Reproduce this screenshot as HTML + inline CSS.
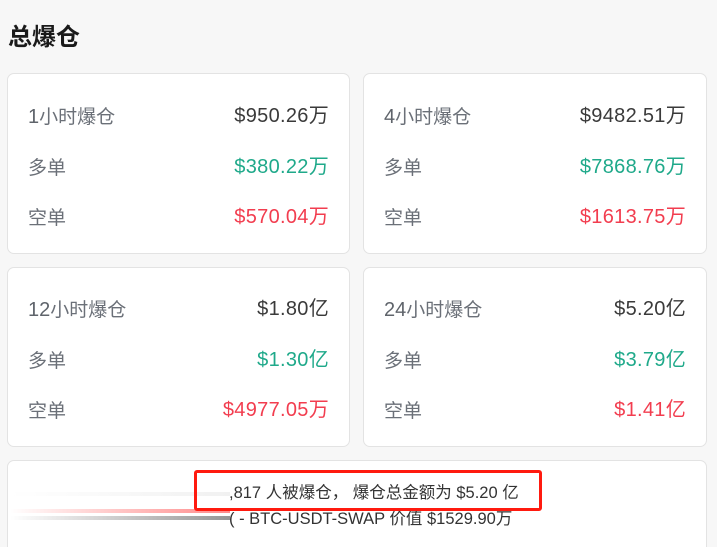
<!DOCTYPE html>
<html><head><meta charset="utf-8"><style>
html,body{margin:0;width:717px;height:547px;overflow:hidden}
body{background:#f7f7f7;font-family:"Liberation Sans","Noto Sans CJK SC",sans-serif;position:relative}
h1{position:absolute;left:8px;top:17px;margin:0;font-size:24px;font-weight:bold;color:#1a1a1a;font-family:"Noto Sans CJK SC",sans-serif;line-height:36px}
.card{position:absolute;background:#fff;border:1px solid #e3e3e3;border-radius:7px;box-sizing:border-box}
.row{position:absolute;left:20px;right:20px;height:30px;line-height:30px;font-size:20px;font-family:"Liberation Sans","Noto Sans CJK SC",sans-serif}
.row .l{position:absolute;left:0;color:#6b7078;font-family:"Noto Sans CJK SC",sans-serif;font-size:19px}
.row .l b{font-weight:normal;font-family:"Liberation Sans",sans-serif;font-size:20px;color:#5f646b}
.row .r{position:absolute;right:0;color:#3a3a3a;letter-spacing:0.3px}
.g{color:#1fa98a!important}.d{color:#f23d4f!important}
</style></head><body>
<h1>总爆仓</h1>
<div class="card" style="left:7px;top:73px;width:343px;height:181px">
<div class="row" style="top:27px"><span class="l"><b>1</b>小时爆仓</span><span class="r">$950.26万</span></div>
<div class="row" style="top:78px"><span class="l">多单</span><span class="r g">$380.22万</span></div>
<div class="row" style="top:128px"><span class="l">空单</span><span class="r d">$570.04万</span></div>
</div>
<div class="card" style="left:363px;top:73px;width:344px;height:181px">
<div class="row" style="top:27px"><span class="l"><b>4</b>小时爆仓</span><span class="r">$9482.51万</span></div>
<div class="row" style="top:78px"><span class="l">多单</span><span class="r g">$7868.76万</span></div>
<div class="row" style="top:128px"><span class="l">空单</span><span class="r d">$1613.75万</span></div>
</div>
<div class="card" style="left:7px;top:267px;width:343px;height:180px">
<div class="row" style="top:26px"><span class="l"><b>12</b>小时爆仓</span><span class="r">$1.80亿</span></div>
<div class="row" style="top:77px"><span class="l">多单</span><span class="r g">$1.30亿</span></div>
<div class="row" style="top:127px"><span class="l">空单</span><span class="r d">$4977.05万</span></div>
</div>
<div class="card" style="left:363px;top:267px;width:344px;height:180px">
<div class="row" style="top:26px"><span class="l"><b>24</b>小时爆仓</span><span class="r">$5.20亿</span></div>
<div class="row" style="top:77px"><span class="l">多单</span><span class="r g">$3.79亿</span></div>
<div class="row" style="top:127px"><span class="l">空单</span><span class="r d">$1.41亿</span></div>
</div>
<div class="card" style="left:7px;top:460px;width:700px;height:100px"></div>
<div style="position:absolute;left:10px;top:492px;width:220px;height:4px;background:linear-gradient(90deg,rgba(220,220,220,0),rgba(220,220,220,.4))"></div>
<div style="position:absolute;left:10px;top:509px;width:220px;height:4px;background:linear-gradient(90deg,rgba(255,80,80,0),rgba(255,60,60,.6))"></div>
<div style="position:absolute;left:10px;top:516px;width:220px;height:4px;background:linear-gradient(90deg,rgba(100,100,100,0),rgba(80,80,80,.6))"></div>
<div style="position:absolute;left:229px;top:481px;font-size:16.5px;color:#333;line-height:24px;white-space:nowrap">,817 人被爆仓， 爆仓总金额为 $5.20 亿</div>
<div style="position:absolute;left:229px;top:507px;font-size:16.5px;color:#333;line-height:24px;white-space:nowrap">( - BTC-USDT-SWAP 价值 $1529.90万</div>
<div style="position:absolute;left:194px;top:470px;width:348px;height:41px;border:3px solid #ff1a0f;border-radius:3px;box-sizing:border-box"></div>
</body></html>
